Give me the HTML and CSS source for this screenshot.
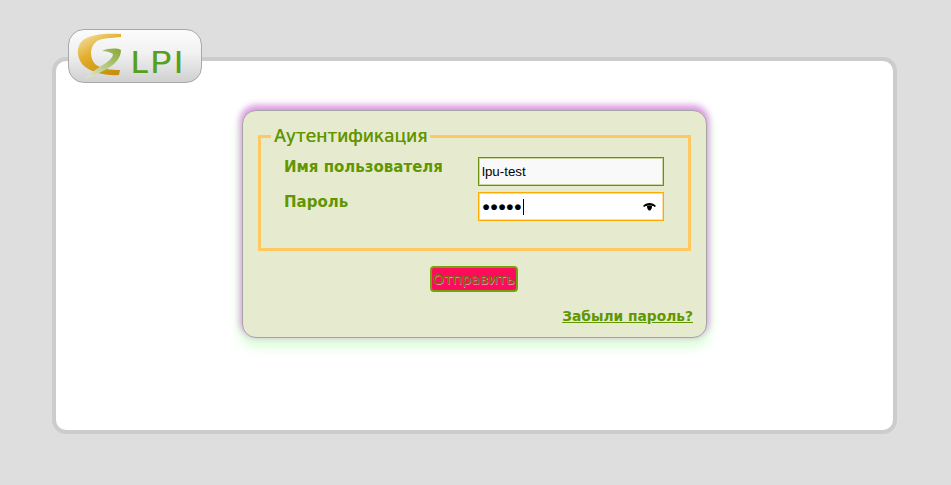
FILE: index.html
```html
<!DOCTYPE html>
<html lang="ru">
<head>
  <meta charset="UTF-8">
  <title>GLPI - Аутентификация</title>
  <link rel="stylesheet" href="styles.css">
</head>
<body>

  <div class="page">
    <div class="logo">
      <svg class="logo-mark" width="46" height="47" viewBox="0 0 46 47">
        <defs>
          <linearGradient id="goldGrad" x1="0.1" y1="0" x2="0.7" y2="1">
            <stop offset="0" stop-color="#f4e3a8"/>
            <stop offset="0.45" stop-color="#e2ae2c"/>
            <stop offset="1" stop-color="#c98f10"/>
          </linearGradient>
          <linearGradient id="greenGrad" x1="0" y1="1" x2="1" y2="0">
            <stop offset="0" stop-color="#e4ecd0"/>
            <stop offset="1" stop-color="#86a835"/>
          </linearGradient>
        </defs>
        <path d="M44 1 L44 4 C34 5 25 5 20 8 C13 13 12 24 18 31 C24 36 34 37 43 37 L42 42 C30 43 14 40 6 32 C-1 24 -1 13 6 7 C14 1 30 0 44 1 Z" fill="url(#goldGrad)"/>
        <path d="M25 18 C32 15 40 15 44 17 C44 25 38 31 30 36 C23 40 15 43 8 46 C14 39 22 34 29 30 C33 27 36 24 36 21 C33 19 29 18 25 18 Z" fill="url(#greenGrad)"/>
      </svg>
      <span class="logo-text">LPI</span>
    </div>

    <div class="box-login">
      <form class="login-form">
        <fieldset class="login-fields">
          <legend>Аутентификация</legend>
          <div class="row">
            <label for="user">Имя пользователя</label>
            <input id="user" class="field field-user" type="text" value="lpu-test">
          </div>
          <div class="row">
            <label for="pass">Пароль</label>
            <div class="field field-pass">
              <span class="dots">●●●●●</span><span class="caret"></span>
              <svg class="eye" width="13" height="9" viewBox="0 0 13 9">
                <path d="M0 4 C3 0 10 0 13 4 L11.8 5 C9.5 3 3.5 3 1.2 5 Z" fill="#000"/>
                <path d="M4 4.2 C5 3.4 8 3.4 9 4.2 C9.2 6 8 8.5 6.5 8.5 C5 8.5 3.8 6 4 4.2 Z" fill="#000"/>
              </svg>
            </div>
          </div>
        </fieldset>
        <div class="submit-row">
          <button class="submit" type="button">Отправить</button>
        </div>
        <div class="forgot-row">
          <a class="forgot" href="#">Забыли пароль?</a>
        </div>
      </form>
    </div>
  </div>

</body>
</html>
```

FILE: styles.css
```css
* { box-sizing: border-box; margin: 0; padding: 0; }
html, body { height: 100%; }
body {
  background: #dedede;
  font-family: "DejaVu Sans", Verdana, sans-serif;
  padding: 57px 54px 0 52px;
  overflow: hidden;
}
.page {
  position: relative;
  height: 377px;
  background: #fff;
  border: 4px solid #ccc;
  border-radius: 14px;
  padding: 49px 0 0 186px;
}
.logo {
  position: absolute;
  top: -32px;
  left: 12px;
  width: 134px;
  height: 54px;
  border: 1px solid #a8a8a8;
  border-radius: 16px;
  background: linear-gradient(#fbfbfb, #f1f1f1 45%, #d0d0d0);
  display: flex;
  align-items: center;
  overflow: hidden;
}
.logo-mark { margin-left: 8px; flex: none; }
.logo-text {
  font-family: "Liberation Sans", Arial, sans-serif;
  font-size: 31px;
  color: #57a01b;
  letter-spacing: 2.5px;
  margin: 13px 0 0 8px;
  text-shadow: 0.5px 0 0 #57a01b;
}
.box-login {
  width: 465px;
  height: 228px;
  background: #e6ebd0;
  border: 1px solid #a5a5a5;
  border-radius: 14px;
  box-shadow: 0 -3px 6px 2px #dc9be2, 0 6px 12px 3px #d8ffd6;
  padding: 15px 15px 0;
}
.login-fields {
  height: 125px;
  border: 3px solid #ffc860;
  padding: 0 24px 0 23px;
}
.login-fields legend {
  font-size: 17px;
  line-height: 20px;
  color: #629600;
  padding: 0 3px;
  margin-left: -13px;
  text-shadow: 0.4px 0 0 #629600;
}
.row {
  display: flex;
  justify-content: space-between;
  height: 29px;
  margin-bottom: 6px;
}
.row:first-of-type { margin-top: 11px; }
.row label {
  font-size: 15px;
  font-weight: bold;
  line-height: 18px;
  padding-top: 1px;
  color: #629600;
}
.field {
  width: 186px;
  height: 29px;
  font-family: "Liberation Sans", Arial, sans-serif;
  font-size: 13.33px;
  color: #000;
  padding: 0 3px;
  outline: none;
}
.field-user {
  background: #f9f9f9;
  border: 1px solid #6b9010;
  box-shadow: inset 0 0 0 1px #c9d8a0;
}
.field-pass {
  display: flex;
  align-items: center;
  background: #fff;
  border: 1px solid #ffab00;
  box-shadow: inset 0 0 0 1px #ffdc9a;
}
.dots { font-size: 13.5px; letter-spacing: -0.2px; }
.caret {
  display: inline-block;
  width: 1px;
  height: 16px;
  background: #000;
  margin-left: 1px;
}
.eye { margin-left: auto; margin-right: 4px; }
.submit-row {
  display: flex;
  justify-content: center;
  margin-top: 15px;
  padding-right: 2px;
}
.submit {
  width: 88px;
  height: 26px;
  background: #ff0a5c;
  border: 2px solid #76a010;
  border-radius: 4px;
  font-family: "DejaVu Sans", Verdana, sans-serif;
  font-size: 14.4px;
  color: #80600f;
  text-shadow: 0.4px 0 0 #80600f, 1px 1px 0 #f58aa8;
  white-space: nowrap;
  overflow: hidden;
}
.forgot-row {
  text-align: right;
  margin: 14px -2px 0 0;
}
.forgot {
  font-size: 13.8px;
  font-weight: bold;
  color: #629600;
}
```
